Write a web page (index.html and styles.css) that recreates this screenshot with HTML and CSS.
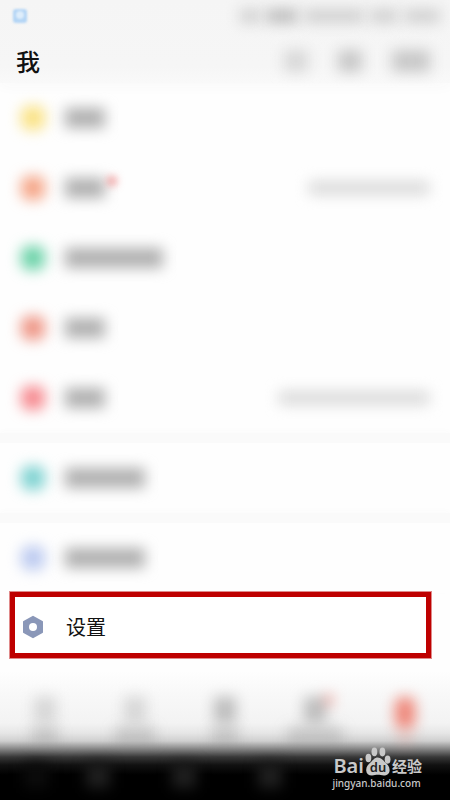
FILE: index.html
```
<!DOCTYPE html>
<html lang="zh-CN">

<head>
  <meta charset="UTF-8">
  <meta name="viewport" content="width=device-width, initial-scale=1.0">
  <title>我</title>
  <link rel="stylesheet" href="styles.css">
</head>

<body>
  <header class="header">
    <div class="status">
      <svg class="status-app" width="14" height="14" viewBox="0 0 14 14">
        <rect width="14" height="14" rx="3" fill="#b4d5f5" />
        <circle cx="7" cy="6" r="4" fill="#deedfb" />
      </svg>
      <div class="status-info">
        <i class="soft info-a"></i>
        <i class="soft info-b"></i>
        <i class="soft info-c"></i>
        <i class="soft info-d"></i>
        <i class="soft info-e"></i>
      </div>
    </div>
    <div class="title-bar">
      <h1 class="title">我</h1>
      <div class="actions">
        <i class="soft action light"></i>
        <i class="soft action"></i>
        <i class="soft action wide"></i>
      </div>
    </div>
  </header>

  <main class="main">
    <div class="group">
      <div class="row"><i class="soft dot yellow"></i><i class="soft label"></i></div>
      <div class="row"><i class="soft dot orange"></i><i class="soft label"></i><i class="soft badge"></i><i class="soft hint"></i></div>
      <div class="row"><i class="soft dot green"></i><i class="soft label label-5"></i></div>
      <div class="row"><i class="soft dot coral"></i><i class="soft label"></i></div>
      <div class="row"><i class="soft dot red"></i><i class="soft label"></i><i class="soft hint hint-long"></i></div>
    </div>
    <div class="group">
      <div class="row"><i class="soft dot teal"></i><i class="soft label label-4"></i></div>
    </div>
    <div class="group">
      <div class="row"><i class="soft dot blue"></i><i class="soft label label-4"></i></div>
    </div>
    <a class="settings" href="#">
      <svg width="22" height="24" viewBox="0 0 22 24">
        <path d="M11 1.8 L20 6.8 V17.2 L11 22.2 L2 17.2 V6.8 Z" fill="#8a97b8" stroke="#8a97b8" stroke-width="2" stroke-linejoin="round" />
        <circle cx="11" cy="12" r="4" fill="#fff" />
      </svg>
      <span>设置</span>
    </a>
  </main>

  <footer class="footer">
    <div class="tabs">
      <div class="tab"><i class="soft tab-icon pale"></i><i class="soft tab-label short"></i></div>
      <div class="tab"><i class="soft tab-icon pale"></i><i class="soft tab-label"></i></div>
      <div class="tab"><i class="soft tab-icon"></i><i class="soft tab-label short"></i></div>
      <div class="tab"><i class="soft tab-icon alert"></i><i class="soft tab-label long"></i></div>
      <div class="tab"><i class="soft tab-icon active"></i><i class="soft tab-label active-label"></i></div>
    </div>
    <div class="nav">
      <i class="soft key faint"></i>
      <i class="soft key"></i>
      <i class="soft key"></i>
      <i class="soft key"></i>
    </div>
    <div class="watermark">
      <div class="brand">
        <span class="brand-en">Bai</span>
        <svg width="26" height="29" viewBox="0 0 26 29">
          <g fill="#c9c9c9">
            <ellipse cx="3.4" cy="11" rx="2.9" ry="4.2" />
            <ellipse cx="9.4" cy="4.8" rx="2.9" ry="4.4" />
            <ellipse cx="17.4" cy="5" rx="2.9" ry="4.4" />
            <ellipse cx="22.6" cy="12.6" rx="2.9" ry="4.2" />
            <path d="M12.8 10.6 C16 10.6 17.6 13 19.8 15 C22.6 17.6 24.8 19.6 24.6 23.4 C24.4 26.6 22 28.4 18.8 28.4 C16.4 28.4 15 27.8 12.8 27.8 C10.6 27.8 9.4 28.4 7 28.4 C3.6 28.4 1.4 26.6 1.2 23.4 C1 19.6 3.2 17.6 6 15 C8.2 13 9.6 10.6 12.8 10.6 Z" />
          </g>
          <text class="brand-du" x="13" y="25" text-anchor="middle">du</text>
        </svg>
        <span class="brand-cn">经验</span>
      </div>
      <div class="brand-url">jingyan.baidu.com</div>
    </div>
  </footer>
</body>

</html>
```

FILE: styles.css
```
* {
  box-sizing: border-box;
}

body {
  display: flex;
  flex-direction: column;
  min-height: 100vh;
  margin: 0;
  background-color: #fefefe;
  color: #111;
  font-family: "Noto Sans CJK SC", sans-serif;
}

.soft {
  display: block;
  flex: none;
  filter: blur(7px);
}

/* header */
.header {
  background: linear-gradient(#f5f5f5 0, #f6f6f6 66px, #f9f9f9 100%);
  box-shadow: 0 4px 12px #f9f9f9;
}

.status {
  display: flex;
  justify-content: space-between;
  align-items: center;
  height: 32px;
  padding: 0 10px 0 13px;
}

.status-app {
  filter: blur(1px);
}

.status-info {
  display: flex;
  align-items: center;
  gap: 6px;
}

.status-info .soft {
  height: 14px;
  background-color: #d0d0d0;
}

.info-a {
  width: 20px;
}

.status-info .info-b {
  width: 32px;
  background-color: #bcbcbc;
}

.info-c {
  width: 60px;
}

.info-d {
  width: 28px;
}

.info-e {
  width: 36px;
}

.title-bar {
  display: flex;
  justify-content: space-between;
  align-items: center;
  height: 51px;
  padding: 6px 20px 0 16px;
}

.title {
  margin: 0;
  font-size: 24px;
  font-weight: 500;
  line-height: 30px;
}

.actions {
  display: flex;
  gap: 30px;
}

.action {
  width: 24px;
  height: 22px;
  background-color: #c8c8c8;
}

.light {
  background-color: #d8d8d8;
}

.wide {
  width: 38px;
}

/* list */
.main {
  flex: 1;
}

.group + .group {
  border-top: 10px solid #fafafa;
  box-shadow: 0 -2px 6px #fbfbfb;
}

.row {
  display: flex;
  align-items: center;
  height: 70px;
  padding: 0 21px;
}

.dot {
  width: 24px;
  height: 24px;
  margin-right: 20px;
  border-radius: 8px;
}

.yellow {
  background-color: #fae284;
}

.orange {
  background-color: #f5a587;
}

.green {
  background-color: #6bd2a8;
}

.coral {
  background-color: #ee9686;
}

.red {
  background-color: #f68a90;
}

.teal {
  background-color: #7ed2d1;
}

.blue {
  background-color: #bccaf0;
}

.label {
  width: 40px;
  height: 20px;
  background-color: #b0b0b0;
}

.label-4 {
  width: 80px;
}

.label-5 {
  width: 98px;
}

.badge {
  align-self: flex-start;
  width: 8px;
  height: 8px;
  margin-top: 24px;
  margin-left: 3px;
  border-radius: 50%;
  background-color: #ee7070;
  filter: blur(4px);
}

.hint {
  width: 120px;
  height: 14px;
  margin-left: auto;
  background-color: #dadada;
}

.hint-long {
  width: 150px;
}

.settings {
  display: flex;
  align-items: center;
  gap: 22px;
  height: 68px;
  margin: -2px 18px 0 9px;
  padding: 4px 7px 0;
  border: 6px solid #be0000;
  outline: 1px solid #e08a8a;
  outline-offset: -1px;
  background-color: #fff;
  color: #111;
  font-size: 20px;
  line-height: 28px;
  text-decoration: none;
}

/* bottom */
.footer {
  position: relative;
  height: 129px;
  padding-top: 12px;
  background: linear-gradient(#fefefe 0, #f8f8f8 24px, #f3f3f3 52px, #e6e6e6 62px, #cfcfcf 70px, #858585 78px, #383838 86px, #111 94px, #000 104px);
}

.tabs {
  display: grid;
  grid-template-columns: repeat(5, 1fr);
  height: 67px;
}

.tab {
  display: flex;
  flex-direction: column;
  align-items: center;
  gap: 4px;
  padding-top: 14px;
}

.tab-icon {
  width: 22px;
  height: 26px;
  background-color: #bcbcbc;
}

.pale {
  background-color: #d6d6d6;
}

.alert {
  box-shadow: 14px -10px 0 -8px #f3897e;
}

.active {
  width: 20px;
  height: 32px;
  border-radius: 8px;
  background-color: #ee8476;
}

.tab-label {
  width: 40px;
  height: 16px;
  background-color: rgba(110, 110, 110, 0.28);
}

.short {
  width: 26px;
}

.long {
  width: 56px;
}

.active-label {
  width: 12px;
  height: 10px;
  background-color: rgba(220, 130, 120, 0.4);
}

.nav {
  display: flex;
  gap: 62px;
  height: 50px;
  padding: 14px 0 0 24px;
}

.key {
  width: 24px;
  height: 24px;
  background-color: #202020;
}

.faint {
  margin-right: -24px;
  background-color: #0c0c0c;
}

.watermark {
  position: absolute;
  right: 28px;
  bottom: 10px;
  color: #c9c9c9;
}

.brand {
  display: flex;
  align-items: flex-end;
  gap: 1px;
  height: 29px;
  padding-left: 1px;
}

.brand-en {
  font-family: "Noto Sans", sans-serif;
  font-size: 20px;
  font-weight: 600;
  line-height: 20px;
}

.brand-du {
  fill: #222;
  font-family: "Noto Sans", sans-serif;
  font-size: 13px;
  font-weight: 600;
}

.brand-cn {
  font-size: 15px;
  font-weight: bold;
  line-height: 20px;
}

.brand-url {
  font-family: "Noto Sans", sans-serif;
  font-size: 10px;
  font-weight: 500;
  line-height: 14px;
}
```
